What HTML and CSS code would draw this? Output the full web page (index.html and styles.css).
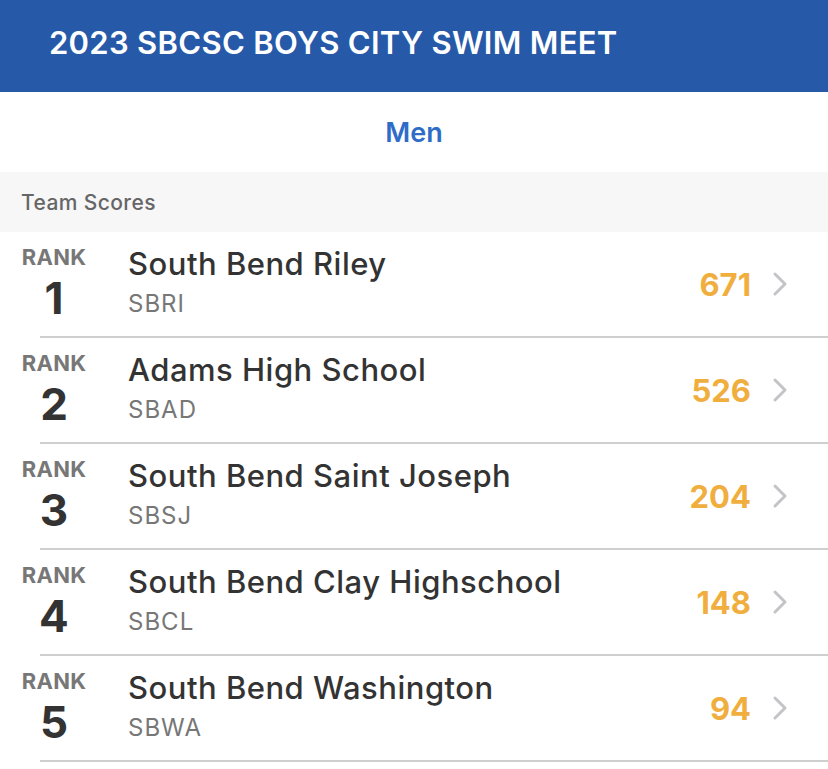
FILE: index.html
```html
<!DOCTYPE html>
<html>
<head>
<meta charset="utf-8">
<link rel="stylesheet" href="styles.css">
</head>
<body>
<header class="topbar"><h1 class="title">2023 SBCSC BOYS CITY SWIM MEET</h1></header>
<div class="tab">Men</div>
<div class="section">Team Scores</div>
<ul class="list">
  <li class="row">
    <div class="rank"><span class="rank-label">RANK</span><span class="rank-num">1</span></div>
    <div class="team"><div class="name">South Bend Riley</div><div class="code">SBRI</div></div>
    <div class="score">671</div>
    <svg class="chev" viewBox="0 0 16 26" width="16" height="26"><path d="M3 3 L13 13 L3 23" fill="none" stroke="#c4c4c8" stroke-width="3" stroke-linecap="round" stroke-linejoin="round"/></svg>
  </li>
  <li class="row">
    <div class="rank"><span class="rank-label">RANK</span><span class="rank-num">2</span></div>
    <div class="team"><div class="name">Adams High School</div><div class="code">SBAD</div></div>
    <div class="score">526</div>
    <svg class="chev" viewBox="0 0 16 26" width="16" height="26"><path d="M3 3 L13 13 L3 23" fill="none" stroke="#c4c4c8" stroke-width="3" stroke-linecap="round" stroke-linejoin="round"/></svg>
  </li>
  <li class="row">
    <div class="rank"><span class="rank-label">RANK</span><span class="rank-num">3</span></div>
    <div class="team"><div class="name">South Bend Saint Joseph</div><div class="code">SBSJ</div></div>
    <div class="score">204</div>
    <svg class="chev" viewBox="0 0 16 26" width="16" height="26"><path d="M3 3 L13 13 L3 23" fill="none" stroke="#c4c4c8" stroke-width="3" stroke-linecap="round" stroke-linejoin="round"/></svg>
  </li>
  <li class="row">
    <div class="rank"><span class="rank-label">RANK</span><span class="rank-num">4</span></div>
    <div class="team"><div class="name">South Bend Clay Highschool</div><div class="code">SBCL</div></div>
    <div class="score">148</div>
    <svg class="chev" viewBox="0 0 16 26" width="16" height="26"><path d="M3 3 L13 13 L3 23" fill="none" stroke="#c4c4c8" stroke-width="3" stroke-linecap="round" stroke-linejoin="round"/></svg>
  </li>
  <li class="row">
    <div class="rank"><span class="rank-label">RANK</span><span class="rank-num">5</span></div>
    <div class="team"><div class="name">South Bend Washington</div><div class="code">SBWA</div></div>
    <div class="score">94</div>
    <svg class="chev" viewBox="0 0 16 26" width="16" height="26"><path d="M3 3 L13 13 L3 23" fill="none" stroke="#c4c4c8" stroke-width="3" stroke-linecap="round" stroke-linejoin="round"/></svg>
  </li>
</ul>
</body>
</html>
```
FILE: styles.css
```css
* { box-sizing: border-box; }
html, body { margin: 0; padding: 0; background: #fff; }
body { font-family: "Inter", "Open Sans", sans-serif; color: #333; }
.topbar {
  background: #2659a8;
  height: 92px;
  display: flex;
  align-items: center;
  padding: 0 0 7px 49px;
}
.title {
  margin: 0;
  color: #fff;
  font-size: 31px;
  font-weight: 600;
  letter-spacing: 0.3px;
}
.tab {
  height: 80px;
  display: flex;
  align-items: center;
  justify-content: center;
  color: #2f6cc7;
  font-size: 27px;
  font-weight: 600;
}
.section {
  background: #f7f7f7;
  height: 60px;
  display: flex;
  align-items: center;
  padding-left: 21px;
  color: #666;
  font-size: 21px;
  font-weight: 500;
  letter-spacing: 0.4px;
}
.list { list-style: none; margin: 0; padding: 0 0 0 40px; }
.row {
  height: 106px;
  display: flex;
  align-items: center;
  border-bottom: 2px solid #cfcfcf;
  padding-right: 40px;
}
.rank {
  width: 108px;
  margin-left: -40px;
  display: flex;
  flex-direction: column;
  align-items: center;
  align-self: flex-start;
  padding-top: 12px;
}
.rank-label { font-size: 22px; font-weight: 700; color: #777; line-height: 27px; letter-spacing: 0.3px; }
.rank-num { font-size: 44px; font-weight: 700; color: #333; line-height: 54px; }
.team { flex: 1; margin-left: 20px; padding-bottom: 2px; }
.name { font-size: 31px; color: #333; line-height: 40px; font-weight: 500; letter-spacing: 0.5px; }
.code { font-size: 24px; color: #777; line-height: 36px; letter-spacing: 1px; padding-top: 2px; }
.score { color: #f0ae3e; font-size: 31px; font-weight: 700; margin-right: 21px; }
.chev { display: block; }
```
